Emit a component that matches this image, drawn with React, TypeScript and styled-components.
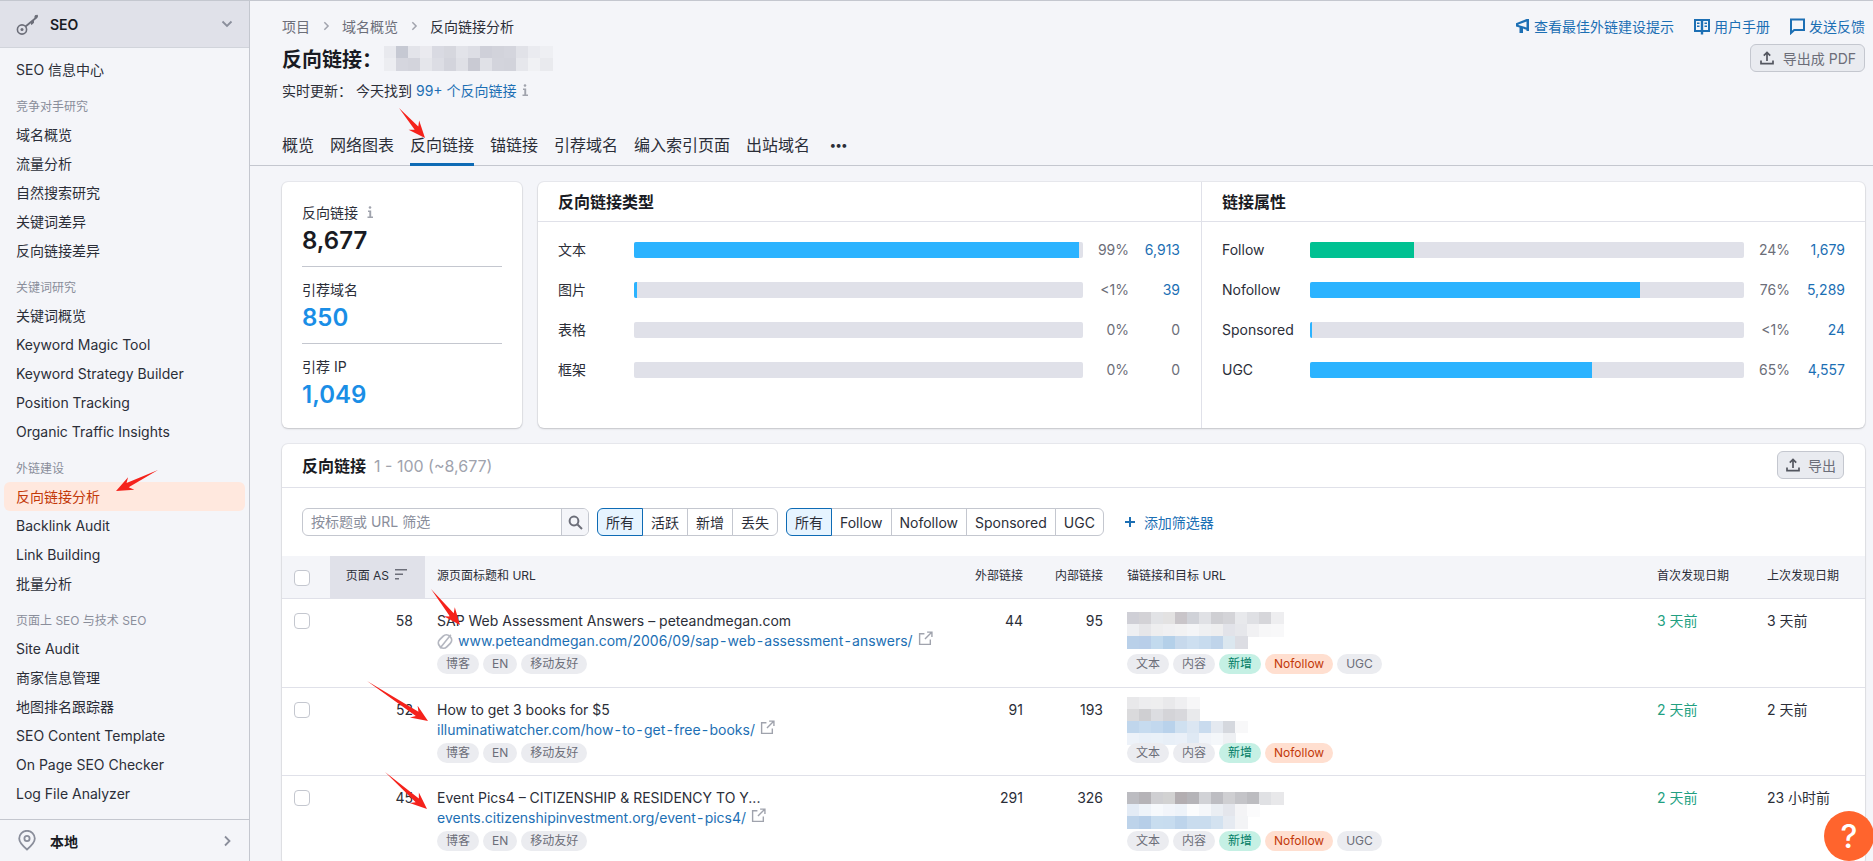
import React from "react";
import styled, { createGlobalStyle } from "styled-components";

const GlobalStyle = createGlobalStyle`
  * { box-sizing: border-box; }
  html, body { margin: 0; padding: 0; height: 100%; overflow: hidden; }
  body {
    font-family: Inter, "Noto Sans CJK SC", sans-serif;
    font-size: 14px;
    color: #191b23;
    background: #f4f5f9;
  }
`;

const Shell = styled.div`
  position: relative;
  display: flex;
  height: 861px;
  overflow: hidden;
  border-top: 1px solid #c4c7cf;
`;

const Sidebar = styled.aside`
  display: flex;
  flex-direction: column;
  flex: 0 0 250px;
  border-right: 1px solid #c4c7cf;
`;

const SideHead = styled.div`
  display: flex;
  align-items: center;
  flex: 0 0 47px;
  padding: 0 16px;
  gap: 10px;
  background: #e0e1e9;
  border-bottom: 1px solid #d1d4db;
  font-weight: 600;
  color: #191b23;
  svg:last-child { margin-left: auto; }
`;

const SideNav = styled.nav`
  display: flex;
  flex-direction: column;
  padding-top: 6.5px;
`;

const NavItem = styled.a<{ $active?: boolean }>`
  display: block;
  height: 29px;
  line-height: 29px;
  margin: 0 4px;
  padding-left: 12px;
  border-radius: 6px;
  color: ${(p) => (p.$active ? "#c33909" : "#2b2e38")};
  background: ${(p) => (p.$active ? "#ffe8de" : "transparent")};
`;

const NavSection = styled.div`
  height: 16px;
  line-height: 16px;
  margin: 15px 0 5px;
  padding-left: 16px;
  font-size: 12px;
  color: #8a8e9b;
`;

const SideFoot = styled.div`
  display: flex;
  align-items: center;
  gap: 14px;
  height: 42px;
  margin-top: auto;
  padding: 0 16px 0 18px;
  border-top: 1px solid #c4c7cf;
  font-weight: 600;
  svg:last-child { margin-left: auto; }
`;

const Main = styled.main`
  flex: 1;
  min-width: 0;
`;

const Head = styled.header`
  display: flex;
  justify-content: space-between;
  padding: 15px 8px 0 32px;
`;

const HeadLeft = styled.div`
  display: flex;
  flex-direction: column;
`;

const Crumbs = styled.div`
  display: flex;
  align-items: center;
  height: 20px;
  gap: 11px;
  color: #6c6e79;
`;

const CrumbNow = styled.span`
  color: #2b2e38;
`;

const Title = styled.h1`
  display: flex;
  align-items: center;
  gap: 2px;
  height: 28px;
  margin: 8px 0 0;
  font-size: 20px;
  font-weight: 700;
`;

const Live = styled.div`
  display: flex;
  align-items: center;
  height: 20px;
  margin-top: 8px;
  color: #2b2e38;
  gap: 4px;
`;

const LinkText = styled.a`
  color: #1c6fb4;
`;

const Hyphen = styled.span`
  margin: 0 1.2px;
`;

const HeadRight = styled.div`
  display: flex;
  flex-direction: column;
  align-items: flex-end;
  gap: 8px;
`;

const HelpLinks = styled.div`
  display: flex;
  height: 20px;
  gap: 20px;
`;

const HelpLink = styled.a`
  display: flex;
  align-items: center;
  gap: 4px;
  color: #1c6fb4;
`;

const GhostButton = styled.button`
  display: flex;
  align-items: center;
  gap: 8px;
  height: 28px;
  padding: 0 8px;
  border: 1px solid #c4c7cf;
  border-radius: 6px;
  background: #e9ebf0;
  color: #6c6e79;
  font: inherit;
`;

const ExportButton = styled(GhostButton)`
  gap: 7px;
  padding: 0 7px;
`;

const Tabs = styled.div`
  display: flex;
  align-items: flex-end;
  gap: 16px;
  height: 66px;
  padding-left: 32px;
  border-bottom: 1px solid #c4c7cf;
`;

const Tab = styled.a<{ $active?: boolean }>`
  height: 39px;
  margin-bottom: -1px;
  padding-top: 6px;
  line-height: 24px;
  font-size: 16px;
  color: #2b2e38;
  border-bottom: 3px solid ${(p) => (p.$active ? "#0e6bb5" : "transparent")};
`;

const TabMore = styled(Tab)`
  margin-left: 4px;
  font-size: 12px;
  font-weight: 700;
`;

const Content = styled.div`
  display: flex;
  flex-direction: column;
  gap: 16px;
  padding: 16px 8px 0 32px;
`;

const Card = styled.section`
  background: #fff;
  border-radius: 6px;
  box-shadow: 0 0 0 1px rgba(25, 27, 35, 0.05), 0 1px 2px rgba(25, 27, 35, 0.18);
`;

const TopRow = styled.div`
  display: grid;
  grid-template-columns: 240px 1fr;
  gap: 16px;
  height: 246px;
`;

const KpiCard = styled(Card)`
  padding: 8px 20px;
`;

const KpiGroup = styled.div`
  padding: 12px 0 9px;
  border-bottom: 1px solid #c4c7cf;
  &:last-child { border-bottom: 0; }
`;

const KpiLabel = styled.div`
  display: flex;
  align-items: center;
  gap: 8px;
  height: 20px;
  color: #2b2e38;
`;

const KpiValue = styled.div<{ $link?: boolean }>`
  height: 32px;
  margin-top: 3px;
  line-height: 32px;
  font-size: 24px;
  font-weight: 600;
  color: ${(p) => (p.$link ? "#1a8ee6" : "#191b23")};
`;

const BarsCard = styled(Card)`
  display: grid;
  grid-template-columns: 664px 663px;
`;

const BarsColumn = styled.div`
  &:first-child { border-right: 1px solid #e0e1e9; }
`;

const BarsTitle = styled.h3`
  height: 40px;
  margin: 0;
  padding-left: 20px;
  line-height: 40px;
  font-size: 16px;
  font-weight: 600;
  border-bottom: 1px solid #e0e1e9;
`;

const BarRows = styled.div`
  display: flex;
  flex-direction: column;
  gap: 24px;
  padding: 20px 0 0 20px;
`;

const BarRow = styled.div<{ $cols: string }>`
  display: grid;
  grid-template-columns: ${(p) => p.$cols};
  align-items: center;
  height: 16px;
  line-height: 16px;
  color: #2b2e38;
`;

const Track = styled.div`
  height: 16px;
  overflow: hidden;
  border-radius: 2px;
  background: #e0e1e9;
`;

const Fill = styled.div<{ $tone?: "green" }>`
  height: 100%;
  background: ${(p) => (p.$tone === "green" ? "#00c192" : "#2bb3ff")};
`;

const Pct = styled.span`
  text-align: right;
  color: #6c6e79;
`;

const BarValue = styled.span<{ $muted?: boolean }>`
  text-align: right;
  color: ${(p) => (p.$muted ? "#6c6e79" : "#1c6fb4")};
`;

const TableHead = styled.div`
  display: flex;
  align-items: center;
  justify-content: space-between;
  height: 44px;
  padding: 0 21px 1px 20px;
  border-bottom: 1px solid #e0e1e9;
`;

const TableTitle = styled.div`
  font-size: 16px;
  font-weight: 600;
  span {
    margin-left: 8px;
    font-weight: 400;
    color: #a0a3ad;
  }
`;

const Filters = styled.div`
  display: flex;
  align-items: center;
  gap: 8px;
  height: 68px;
  padding: 0 20px;
`;

const SearchBox = styled.div`
  display: flex;
  width: 287px;
  height: 28px;
  overflow: hidden;
  border: 1px solid #c4c7cf;
  border-radius: 6px;
`;

const SearchInput = styled.div`
  flex: 1;
  padding-left: 8px;
  line-height: 26px;
  color: #8a8e9b;
`;

const SearchButton = styled.div`
  display: flex;
  align-items: center;
  justify-content: center;
  width: 27px;
  background: #f4f5f9;
  border-left: 1px solid #c4c7cf;
`;

const Segments = styled.div`
  display: flex;
  height: 28px;
`;

const Segment = styled.button<{ $active?: boolean }>`
  position: relative;
  z-index: ${(p) => (p.$active ? 1 : 0)};
  margin-left: -1px;
  padding: 0 8px;
  border: 1px solid ${(p) => (p.$active ? "#0e6bb5" : "#c4c7cf")};
  background: ${(p) => (p.$active ? "#e6f4ff" : "#fff")};
  color: #2b2e38;
  font: inherit;
  &:first-child { margin-left: 0; border-radius: 6px 0 0 6px; }
  &:last-child { border-radius: 0 6px 6px 0; }
`;

const AddFilter = styled.a`
  display: flex;
  align-items: center;
  gap: 8px;
  margin-left: 12px;
  color: #1c6fb4;
`;

const COLS = "48px 95px 535px 75px 80px 530px 110px 110px";

const HeadRow = styled.div`
  display: grid;
  grid-template-columns: ${COLS};
  height: 43px;
  background: #f4f5f9;
  border-bottom: 1px solid #e0e1e9;
  font-size: 12px;
  color: #2b2e38;
`;

const HeadCell = styled.div<{ $right?: boolean; $sorted?: boolean }>`
  display: flex;
  justify-content: ${(p) => (p.$right ? "flex-end" : "flex-start")};
  gap: 6px;
  padding: 12px ${(p) => (p.$sorted ? "18px" : "12px")} 0 12px;
  line-height: 16px;
  background: ${(p) => (p.$sorted ? "#e0e1e9" : "transparent")};
`;

const Row = styled.div`
  display: grid;
  grid-template-columns: ${COLS};
  height: 88.5px;
  border-bottom: 1px solid #e0e1e9;
`;

const CheckCell = styled.div<{ $head?: boolean }>`
  padding: 14px 0 0 12px;
`;

const Checkbox = styled.span`
  display: block;
  width: 16px;
  height: 16px;
  border: 1px solid #c4c7cf;
  border-radius: 4px;
  background: #fff;
`;

const NumCell = styled.div`
  padding: 12px 12px 0 0;
  line-height: 20px;
  text-align: right;
  color: #2b2e38;
`;

const TextCell = styled.div`
  min-width: 0;
  padding: 12px 0 0 12px;
  line-height: 20px;
`;

const DateCell = styled(TextCell)<{ $fresh?: boolean }>`
  color: ${(p) => (p.$fresh ? "#229f81" : "#2b2e38")};
`;

const PageTitle = styled.div`
  height: 20px;
  color: #2b2e38;
`;

const UrlLine = styled.div`
  display: flex;
  align-items: center;
  gap: 5px;
  height: 20px;
`;

const Tags = styled.div`
  display: flex;
  gap: 4px;
  margin-top: 3px;
`;

const Tag = styled.span<{ $tone?: "green" | "orange" }>`
  height: 20px;
  padding: 0 9px;
  border-radius: 10px;
  line-height: 20px;
  font-size: 12px;
  background: ${(p) =>
    p.$tone === "green" ? "#c5f0e4" : p.$tone === "orange" ? "#ffdfd0" : "#ebecf0"};
  color: ${(p) =>
    p.$tone === "green" ? "#007c65" : p.$tone === "orange" ? "#c33909" : "#6c6e79"};
`;

const MosaicSlot = styled.div`
  height: 40px;
`;

const MosaicBox = styled.svg`
  display: block;
  overflow: visible;
`;

const HelpBubble = styled.a`
  position: absolute;
  right: -1px;
  bottom: 0;
  display: flex;
  align-items: center;
  justify-content: center;
  width: 50px;
  height: 50px;
  border-radius: 50%;
  background: #ff642d;
  color: #fff;
  font-size: 32px;
  font-weight: 500;
`;

const Annotations = styled.svg`
  position: absolute;
  top: -1px;
  left: 0;
  pointer-events: none;
`;

const Chevron = ({ dir, size = 12, color = "#8a8e9b" }: { dir: "down" | "right"; size?: number; color?: string }) => (
  <svg width={size} height={size} viewBox="0 0 12 12" fill="none" stroke={color} strokeWidth="1.8">
    <path d={dir === "down" ? "M1.5 3.5 6 8l4.5-4.5" : "M4 1.5 8.5 6 4 10.5"} />
  </svg>
);

const InfoIcon = () => (
  <svg width="8" height="14" viewBox="0 0 8 14" fill="#a0a3ad">
    <circle cx="4" cy="2.5" r="1.3" />
    <path d="M2 5.5h3.2v6H7V13H1.5v-1.5h1.8V7H2z" />
  </svg>
);

const UploadIcon = () => (
  <svg width="16" height="16" viewBox="0 0 16 16" fill="none" stroke="#53565f" strokeWidth="1.7">
    <path d="M8 11V2.5M4.8 5.6 8 2.4l3.2 3.2M2 10.5v3.2h12v-3.2" />
  </svg>
);

const ExternalIcon = () => (
  <svg width="15" height="15" viewBox="0 0 14 14" fill="none" stroke="#a0a3ad" strokeWidth="1.3" style={{ marginTop: -5 }}>
    <path d="M6 2.5H1.5v10h10V8M8.5 1h4.5v4.5M13 1 6.5 7.5" />
  </svg>
);

const NoLinkIcon = () => (
  <svg width="16" height="17" viewBox="0 0 16 17" fill="none" stroke="#b4b7c0" strokeWidth="1.8">
    <rect x="1" y="3.5" width="14" height="10" rx="4.5" transform="rotate(-45 8 8.5)" />
    <path d="M13.8 1.8 3 15.2" strokeWidth="1.6" />
  </svg>
);

const KeyIcon = () => (
  <svg width="24" height="24" viewBox="0 0 24 24" fill="none" stroke="#6c6e79">
    <circle cx="6" cy="17.5" r="4.6" strokeWidth="1.6" />
    <circle cx="6" cy="17.5" r="1.5" fill="#6c6e79" stroke="none" />
    <path d="M9.5 14.5 21 5" strokeWidth="1.8" />
    <path d="M15.5 9.5v3l2-1.6V8M19 7V3.8l2.4-.6V5.2" fill="#6c6e79" strokeWidth="1" />
  </svg>
);

const PinIcon = () => (
  <svg width="18" height="21" viewBox="0 0 18 21" fill="none" stroke="#8a8e9b" strokeWidth="1.8">
    <path d="M9 19.5C4.5 15.8 1.2 12.6 1.2 8.6a7.8 7.8 0 0 1 15.6 0c0 4-3.3 7.2-7.8 10.9z" />
    <circle cx="9" cy="8.5" r="2.6" />
  </svg>
);

const MegaphoneIcon = () => (
  <svg width="14" height="16" viewBox="0 0 14 16" fill="#1c6fb4">
    <path d="M10.5 1H13v12h-2.5v-1.2L7 10.6V15H3.5v-5.4L0 8.4V5.2zM10.5 3.6 2.4 6.4v.5l8.1 2.6z" fillRule="evenodd" />
  </svg>
);

const BookIcon = () => (
  <svg width="16" height="17" viewBox="0 0 16 17" fill="#1c6fb4">
    <path d="M0 1h16v13H9.2v2.4H6.8V14H0zM2 3v9h4.8V3zm7.2 0v9H14V3z" fillRule="evenodd" />
    <path d="M3 4.5h2.5V6H3zM3 7.5h2.5V9H3zM10.5 4.5H13V6h-2.5zM10.5 7.5H13V9h-2.5z" />
  </svg>
);

const ChatIcon = () => (
  <svg width="15" height="17" viewBox="0 0 15 17" fill="none" stroke="#1c6fb4" strokeWidth="2">
    <path d="M1 15V1.5h13V12H4.2z" />
  </svg>
);

const SearchIcon = () => (
  <svg width="15" height="15" viewBox="0 0 15 15" fill="none" stroke="#6c6e79" strokeWidth="2">
    <circle cx="6" cy="6" r="4.4" />
    <path d="m9.5 9.5 4.5 4.5" />
  </svg>
);

const PlusIcon = () => (
  <svg width="12" height="12" viewBox="0 0 12 12" stroke="#1c6fb4" strokeWidth="2">
    <path d="M6 1v10M1 6h10" />
  </svg>
);

const SortIcon = () => (
  <svg width="12" height="14" viewBox="0 0 12 14" fill="#6c6e79">
    <path d="M0 1h12v1.6H0zM0 5.5h8v1.6H0zM0 10h4v1.6H0z" />
  </svg>
);

// pixelated patches hiding the domain and the anchor urls
const Mosaic = ({ rows, top = 0 }: { rows: string[][]; top?: number }) => {
  const cols = Math.max(...rows.map((r) => r.length));
  return (
    <MosaicBox width={cols * 12} height={rows.length * 12 + top} shapeRendering="crispEdges">
      {rows.map((r, y) =>
        r.map((c, x) => <rect key={`${x}-${y}`} x={x * 12} y={top + y * 12} width="12.5" height="12.5" fill={c} />)
      )}
    </MosaicBox>
  );
};

// hyphens sit wider in the urls than Inter sets them
const SpacedUrl = ({ url }: { url: string }) => (
  <LinkText>
    {url.split("-").map((part, i) => (
      <React.Fragment key={i}>
        {i > 0 && <Hyphen>-</Hyphen>}
        {part}
      </React.Fragment>
    ))}
  </LinkText>
);

const domainPatch = [
  ["#e8e9ee", "#c6c9d3", "#e3e4ea", "#eaeaef", "#d9dae2", "#d6d7de", "#e2e3e9", "#dddee5", "#cfd0d9", "#d2d3db", "#d4d5dd", "#e1e2e8", "#eaebf0", "#eeeff3"],
  ["#ecedf1", "#d5d6de", "#d3d4dc", "#e5e6eb", "#dcdde4", "#d3d4dc", "#dfe0e6", "#c9cad3", "#e0e1e7", "#d3d4dc", "#d2d3db", "#e6e7ec", "#f0f1f4", "#e9eaee"],
];

const anchorPatches = [
  [
    ["#cfcfd6", "#d3d2d6", "#e2e3e6", "#e3e2e2", "#c9c5c9", "#d0d2d8", "#e0e1e5", "#cfcfd3", "#d4d4d8", "#e8e9ec", "#dfe0e4", "#d6d6da", "#eeeef0"],
    ["#eeeff2", "#e6e6e9", "#eeeeef", "#f0f0f2", "#f2f2f3", "#f4f5f7", "#eff0f2", "#eeeeef", "#e2e3e9", "#e6e7eb", "#f1f1f3", "#f7f7f8", "#f8f8f9"],
    ["#b9d0e9", "#b8cee9", "#c2daee", "#b4d0e9", "#c7d9ec", "#cddff0", "#c7dbee", "#bfd4ea", "#dbe7ef", "#dcdde3"],
  ],
  [
    ["#e8e8ea", "#ededef", "#eeeeef", "#e9e9eb", "#efeff1", "#f7f7f8"],
    ["#dadadc", "#cfcfd2", "#dcdde1", "#d4d4d8", "#d8d8dc", "#e9eaec"],
    ["#c0d6ec", "#c6dbef", "#c2d8ee", "#b9d2eb", "#cfe0f0", "#dbe6f2", "#c9dbee", "#e4e9f0", "#d5d8de", "#f8f8f9"],
    ["#edf2f9", "#e9f0f8", "#eaf1f8", "#e8eff7", "#eaf0f8", "#dfe9f4", "#f1f4f9", "#f4f7fa", "#eef0f3"],
  ],
  [
    ["#bcbcc1", "#b5b3b7", "#cfcfd2", "#d2d2d2", "#b3aeb1", "#b5b4b8", "#d1d2d6", "#bdbdc2", "#cfcfd2", "#c4c4c8", "#bcbcc0", "#e0e1e4", "#e8e8ea"],
    ["#e3ebf5", "#eef3f9", "#f6f9fc", "#f2f5fa", "#eef3f9", "#fbfcfd", "#f5f7fa", "#eaeef3", "#e4e6ec", "#f4f4f6", "#fbfbfc"],
    ["#bdd3ea", "#b6cee8", "#c8ddef", "#c7dcef", "#bdd4eb", "#c9dcee", "#c9dcee", "#d3e2f0", "#e5eaf1", "#f3f4f6"],
  ],
];

type NavEntry = { section?: string; label?: string; active?: boolean };

const nav: NavEntry[] = [
  { label: "SEO 信息中心" },
  { section: "竞争对手研究" },
  { label: "域名概览" },
  { label: "流量分析" },
  { label: "自然搜索研究" },
  { label: "关键词差异" },
  { label: "反向链接差异" },
  { section: "关键词研究" },
  { label: "关键词概览" },
  { label: "Keyword Magic Tool" },
  { label: "Keyword Strategy Builder" },
  { label: "Position Tracking" },
  { label: "Organic Traffic Insights" },
  { section: "外链建设" },
  { label: "反向链接分析", active: true },
  { label: "Backlink Audit" },
  { label: "Link Building" },
  { label: "批量分析" },
  { section: "页面上 SEO 与技术 SEO" },
  { label: "Site Audit" },
  { label: "商家信息管理" },
  { label: "地图排名跟踪器" },
  { label: "SEO Content Template" },
  { label: "On Page SEO Checker" },
  { label: "Log File Analyzer" },
];

const tabs = ["概览", "网络图表", "反向链接", "锚链接", "引荐域名", "编入索引页面", "出站域名"];

const typeBars = [
  { label: "文本", fill: 99, pct: "99%", value: "6,913" },
  { label: "图片", fill: 0.7, pct: "<1%", value: "39" },
  { label: "表格", fill: 0, pct: "0%", value: "0", muted: true },
  { label: "框架", fill: 0, pct: "0%", value: "0", muted: true },
];

const attrBars = [
  { label: "Follow", fill: 24, pct: "24%", value: "1,679", tone: "green" as const },
  { label: "Nofollow", fill: 76, pct: "76%", value: "5,289" },
  { label: "Sponsored", fill: 0.5, pct: "<1%", value: "24" },
  { label: "UGC", fill: 65, pct: "65%", value: "4,557" },
];

const rows = [
  {
    as: 58,
    title: "SAP Web Assessment Answers – peteandmegan.com",
    url: "www.peteandmegan.com/2006/09/sap-web-assessment-answers/",
    noLink: true,
    ext: 44,
    int: 95,
    ugc: true,
    patchTop: 1,
    first: "3 天前",
    last: "3 天前",
  },
  {
    as: 52,
    title: "How to get 3 books for $5",
    url: "illuminatiwatcher.com/how-to-get-free-books/",
    ext: 91,
    int: 193,
    ugc: false,
    patchTop: -3.5,
    first: "2 天前",
    last: "2 天前",
  },
  {
    as: 45,
    title: "Event Pics4 – CITIZENSHIP & RESIDENCY TO Y...",
    url: "events.citizenshipinvestment.org/event-pics4/",
    ext: 291,
    int: 326,
    ugc: true,
    patchTop: 4,
    first: "2 天前",
    last: "23 小时前",
  },
];

const arrows: [number, number, number, number][] = [
  [399, 108, 425, 138],
  [158, 470, 116, 491],
  [431, 589, 460, 625],
  [367, 681, 428, 721],
  [385, 772, 427, 809],
];

const arrowPoints = ([tx, ty, px, py]: [number, number, number, number]) => {
  const len = Math.hypot(px - tx, py - ty);
  const dx = (px - tx) / len;
  const dy = (py - ty) / len;
  const at = (back: number, side: number) =>
    `${px - dx * back - dy * side},${py - dy * back + dx * side}`;
  return [
    `${tx},${ty}`,
    at(13, 2.4),
    at(17, 7),
    `${px},${py}`,
    at(17, -7),
    at(13, -2.4),
  ].join(" ");
};

const BarList = ({ items, cols }: { items: typeof attrBars | typeof typeBars; cols: string }) => (
  <BarRows>
    {items.map((b: any) => (
      <BarRow key={b.label} $cols={cols}>
        <span>{b.label}</span>
        <Track>
          <Fill $tone={b.tone} style={{ width: `${b.fill}%` }} />
        </Track>
        <Pct>{b.pct}</Pct>
        <BarValue $muted={b.muted}>{b.value}</BarValue>
      </BarRow>
    ))}
  </BarRows>
);

export default function App() {
  return (
    <>
      <GlobalStyle />
      <Shell>
        <Sidebar>
          <SideHead>
            <KeyIcon />
            <span>SEO</span>
            <Chevron dir="down" />
          </SideHead>
          <SideNav>
            {nav.map((n) =>
              n.section ? (
                <NavSection key={n.section}>{n.section}</NavSection>
              ) : (
                <NavItem key={n.label} $active={n.active}>
                  {n.label}
                </NavItem>
              )
            )}
          </SideNav>
          <SideFoot>
            <PinIcon />
            <span>本地</span>
            <Chevron dir="right" />
          </SideFoot>
        </Sidebar>

        <Main>
          <Head>
            <HeadLeft>
              <Crumbs>
                <span>项目</span>
                <Chevron dir="right" size={10} color="#a0a3ad" />
                <span>域名概览</span>
                <Chevron dir="right" size={10} color="#a0a3ad" />
                <CrumbNow>反向链接分析</CrumbNow>
              </Crumbs>
              <Title>
                反向链接：
                <Mosaic rows={domainPatch} />
              </Title>
              <Live>
                <span>实时更新：</span>
                <span>今天找到</span>
                <LinkText>99+ 个反向链接</LinkText>
                <InfoIcon />
              </Live>
            </HeadLeft>
            <HeadRight>
              <HelpLinks>
                <HelpLink>
                  <MegaphoneIcon />
                  查看最佳外链建设提示
                </HelpLink>
                <HelpLink>
                  <BookIcon />
                  用户手册
                </HelpLink>
                <HelpLink>
                  <ChatIcon />
                  发送反馈
                </HelpLink>
              </HelpLinks>
              <GhostButton>
                <UploadIcon />
                导出成 PDF
              </GhostButton>
            </HeadRight>
          </Head>

          <Tabs>
            {tabs.map((t) => (
              <Tab key={t} $active={t === "反向链接"}>
                {t}
              </Tab>
            ))}
            <TabMore>•••</TabMore>
          </Tabs>

          <Content>
            <TopRow>
              <KpiCard>
                <KpiGroup>
                  <KpiLabel>
                    反向链接 <InfoIcon />
                  </KpiLabel>
                  <KpiValue>8,677</KpiValue>
                </KpiGroup>
                <KpiGroup>
                  <KpiLabel>引荐域名</KpiLabel>
                  <KpiValue $link>850</KpiValue>
                </KpiGroup>
                <KpiGroup>
                  <KpiLabel>引荐 IP</KpiLabel>
                  <KpiValue $link>1,049</KpiValue>
                </KpiGroup>
              </KpiCard>

              <BarsCard>
                <BarsColumn>
                  <BarsTitle>反向链接类型</BarsTitle>
                  <BarList items={typeBars} cols="76px 449px 46px 51px" />
                </BarsColumn>
                <BarsColumn>
                  <BarsTitle>链接属性</BarsTitle>
                  <BarList items={attrBars} cols="88px 434px 46px 55px" />
                </BarsColumn>
              </BarsCard>
            </TopRow>

            <Card>
              <TableHead>
                <TableTitle>
                  反向链接<span>1 - 100 (~8,677)</span>
                </TableTitle>
                <ExportButton>
                  <UploadIcon />
                  导出
                </ExportButton>
              </TableHead>

              <Filters>
                <SearchBox>
                  <SearchInput>按标题或 URL 筛选</SearchInput>
                  <SearchButton>
                    <SearchIcon />
                  </SearchButton>
                </SearchBox>
                <Segments>
                  <Segment $active>所有</Segment>
                  <Segment>活跃</Segment>
                  <Segment>新增</Segment>
                  <Segment>丢失</Segment>
                </Segments>
                <Segments>
                  <Segment $active>所有</Segment>
                  <Segment>Follow</Segment>
                  <Segment>Nofollow</Segment>
                  <Segment>Sponsored</Segment>
                  <Segment>UGC</Segment>
                </Segments>
                <AddFilter>
                  <PlusIcon />
                  添加筛选器
                </AddFilter>
              </Filters>

              <HeadRow>
                <CheckCell>
                  <Checkbox />
                </CheckCell>
                <HeadCell $right $sorted>
                  页面 AS
                  <SortIcon />
                </HeadCell>
                <HeadCell>源页面标题和 URL</HeadCell>
                <HeadCell $right>外部链接</HeadCell>
                <HeadCell $right>内部链接</HeadCell>
                <HeadCell>锚链接和目标 URL</HeadCell>
                <HeadCell>首次发现日期</HeadCell>
                <HeadCell>上次发现日期</HeadCell>
              </HeadRow>

              {rows.map((r, i) => (
                <Row key={r.as}>
                  <CheckCell>
                    <Checkbox />
                  </CheckCell>
                  <NumCell>{r.as}</NumCell>
                  <TextCell>
                    <PageTitle>{r.title}</PageTitle>
                    <UrlLine>
                      {r.noLink && <NoLinkIcon />}
                      <SpacedUrl url={r.url} />
                      <ExternalIcon />
                    </UrlLine>
                    <Tags>
                      <Tag>博客</Tag>
                      <Tag>EN</Tag>
                      <Tag>移动友好</Tag>
                    </Tags>
                  </TextCell>
                  <NumCell>{r.ext}</NumCell>
                  <NumCell>{r.int}</NumCell>
                  <TextCell>
                    <MosaicSlot>
                      <Mosaic rows={anchorPatches[i]} top={r.patchTop} />
                    </MosaicSlot>
                    <Tags>
                      <Tag>文本</Tag>
                      <Tag>内容</Tag>
                      <Tag $tone="green">新增</Tag>
                      <Tag $tone="orange">Nofollow</Tag>
                      {r.ugc && <Tag>UGC</Tag>}
                    </Tags>
                  </TextCell>
                  <DateCell $fresh>{r.first}</DateCell>
                  <DateCell>{r.last}</DateCell>
                </Row>
              ))}
            </Card>
          </Content>
        </Main>

        <HelpBubble>?</HelpBubble>
        <Annotations width="1873" height="861">
          {arrows.map((a) => (
            <polygon key={a.join()} points={arrowPoints(a)} fill="#f5221b" />
          ))}
        </Annotations>
      </Shell>
    </>
  );
}
